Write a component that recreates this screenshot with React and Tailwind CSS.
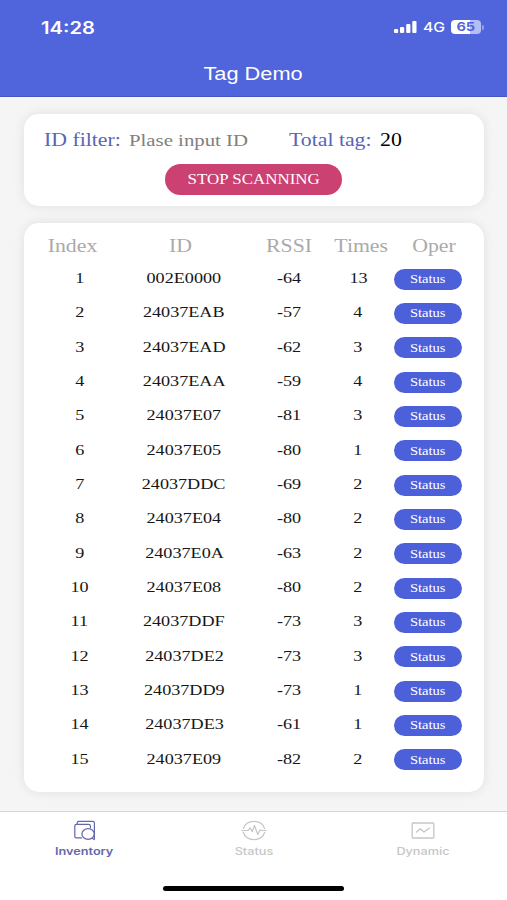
const tags = [
  ['002E0000', -64, 13],
  ['24037EAB', -57, 4],
  ['24037EAD', -62, 3],
  ['24037EAA', -59, 4],
  ['24037E07', -81, 3],
  ['24037E05', -80, 1],
  ['24037DDC', -69, 2],
  ['24037E04', -80, 2],
  ['24037E0A', -63, 2],
  ['24037E08', -80, 2],
  ['24037DDF', -73, 3],
  ['24037DE2', -73, 3],
  ['24037DD9', -73, 1],
  ['24037DE3', -61, 1],
  ['24037E09', -82, 2],
];

// Horizontally widened text, anchored at its centre
function Wide({ children, className = '' }) {
  return <span className={`inline-block shrink-0 scale-x-[1.21] whitespace-nowrap ${className}`}>{children}</span>;
}

// Horizontally widened text, anchored at its left edge
function WideLeft({ children, className = '' }) {
  return <span className={`inline-block origin-left scale-x-[1.21] whitespace-nowrap ${className}`}>{children}</span>;
}

function Cell({ children }) {
  return <div className="flex min-w-0 items-center justify-center">{children}</div>;
}

function StatusBar() {
  return (
    <div className="flex h-[54px] items-center pl-[41px] pr-[23px]">
      <span className="mt-px inline-block origin-left scale-x-[1.21] font-['Inter',sans-serif] text-[16.7px] font-semibold leading-5">14:28</span>
      <div className="ml-auto flex items-center">
        <svg width="23" height="12" viewBox="0 0 23 12" fill="currentColor">
          <rect x="0" y="8" width="4.2" height="4" rx="1" />
          <rect x="6" y="6" width="4.2" height="6" rx="1" />
          <rect x="12.2" y="3" width="4.2" height="9" rx="1" />
          <rect x="18.3" y="0" width="4.2" height="12" rx="1" />
        </svg>
        <span className="ml-[6px] w-[28px]">
          <span className="inline-block origin-left scale-x-[1.21] font-['Inter',sans-serif] text-[13px] font-medium leading-5">4G</span>
        </span>
        <div className="flex h-[14px] w-[30px] items-center justify-center rounded-[4px] bg-linear-to-r from-white from-65% to-[#b4bdf4] to-65%">
          <span className="inline-block scale-x-[1.21] font-['Inter',sans-serif] text-[12px] font-bold leading-[14px] text-[#5064dc]">65</span>
        </div>
        <div className="ml-px h-[5px] w-[2px] rounded-r-full bg-[#98a4ee]" />
      </div>
    </div>
  );
}

function Tab({ label, active, children }) {
  return (
    <div className={`flex flex-1 flex-col items-center pt-[8px] ${active ? 'text-[#6268a8]' : 'text-[#c6c6c6]'}`}>
      {children}
      <span className={`mt-[2px] inline-block scale-x-[1.21] font-['Inter',sans-serif] text-[10.5px] leading-4 ${active ? 'font-semibold' : 'font-medium'}`}>{label}</span>
    </div>
  );
}

export default function App() {
  return (
    <div className="flex h-[900px] w-[507px] flex-col overflow-hidden bg-[#f5f5f5] font-['Liberation_Serif',serif]">
      <header className="h-[97px] shrink-0 border-b border-[#4657c4] bg-[#5064dc] text-white">
        <StatusBar />
        <div className="flex h-[40px] items-center justify-center">
          <Wide className="font-['Liberation_Sans',sans-serif] text-[18px] leading-6">Tag Demo</Wide>
        </div>
      </header>

      <main className="flex h-[714px] shrink-0 flex-col px-[23.5px] pt-[17px]">
        <section className="flex h-[92px] flex-col rounded-[15px] bg-white pt-[14px] shadow-[0_0_12px_rgba(0,0,0,0.09)]">
          <div className="flex h-[24px] items-center pl-[20px] text-[18px] leading-6">
            <div className="w-[85px] text-[#5a64b4]"><WideLeft>ID filter:</WideLeft></div>
            <div className="w-[160px] pt-[2px] text-[17.2px] text-[#808080]"><WideLeft>Plase input ID</WideLeft></div>
            <div className="w-[91px] text-[#5a64b4]"><WideLeft>Total tag:</WideLeft></div>
            <div className="text-black"><WideLeft>20</WideLeft></div>
          </div>
          <button className="mt-[12px] flex h-[31px] w-[177px] items-center justify-center self-center rounded-full bg-[#cb4171] text-[14px] text-white">
            <Wide>STOP SCANNING</Wide>
          </button>
        </section>

        <section className="mt-[17px] h-[569px] rounded-[15px] bg-white pt-[11px] shadow-[0_0_12px_rgba(0,0,0,0.09)]">
          <div className="grid h-[23px] grid-cols-[98px_118px_100px_44px_100px] text-[18px] leading-6 text-[#aaaaaa]">
            {['Index', 'ID', 'RSSI', 'Times', 'Oper'].map((h) => (
              <Cell key={h}><Wide>{h}</Wide></Cell>
            ))}
          </div>
          <div className="pt-[4px]">
            {tags.map(([id, rssi, times], i) => (
              <div key={id} className="grid h-[34.33px] grid-cols-[112px_97px_112px_27px_112px] text-[15px] leading-5 text-[#161616]">
                <Cell><Wide>{i + 1}</Wide></Cell>
                <Cell><Wide>{id}</Wide></Cell>
                <Cell><Wide>{rssi}</Wide></Cell>
                <Cell><Wide>{times}</Wide></Cell>
                <Cell>
                  <button className="mt-[2px] flex h-[21px] w-[68px] items-center justify-center rounded-full bg-[#4c60da] text-[12px] text-white">
                    <Wide>Status</Wide>
                  </button>
                </Cell>
              </div>
            ))}
          </div>
        </section>
      </main>

      <footer className="flex flex-1 flex-col border-t border-[#d6d6d6] bg-white">
        <nav className="flex h-[74px]">
          <Tab label="Inventory" active>
            <svg width="22" height="22" viewBox="0 0 22 22" fill="none" stroke="currentColor" strokeWidth="1.2">
              <path d="M8 17.8H2.2Q0.8 17.8 0.8 16.4V5.8Q0.8 4.3 2.4 4.3H14.6Q16.4 4.3 16.4 6V8.2" />
              <path d="M3.2 4.2V3Q3.2 1.4 4.8 1.4H18.8Q20.4 1.4 20.4 3V19.6" />
              <ellipse cx="14.1" cy="14" rx="6.2" ry="5.4" />
              <path d="M17.8 18.1L20.6 19.8" />
            </svg>
          </Tab>
          <Tab label="Status">
            <svg width="26" height="22" viewBox="0 0 26 22" fill="none" stroke="currentColor" strokeWidth="1.2" strokeLinejoin="round">
              <path d="M2.2 9C3.6 4.4 7.8 1.4 13 1.4S22.4 4.4 23.8 9M2.2 12C3.6 16.6 7.8 19.6 13 19.6S22.4 16.6 23.8 12" />
              <path d="M0.5 10.5H7L9.3 7.9L11.2 11.7L13.5 5.5L16.8 14.5L19 9.9L21 10.5H25.5" />
            </svg>
          </Tab>
          <Tab label="Dynamic">
            <svg width="24" height="22" viewBox="0 0 24 22" fill="none" stroke="currentColor" strokeWidth="1.3" strokeLinejoin="round">
              <rect x="1.2" y="3" width="21.6" height="15" rx="0.8" />
              <path d="M5 12.4L9.2 8.8L13 12L18.8 7.8" />
            </svg>
          </Tab>
        </nav>
        <div className="h-[5px] w-[181px] self-center rounded-full bg-black" />
      </footer>
    </div>
  );
}
